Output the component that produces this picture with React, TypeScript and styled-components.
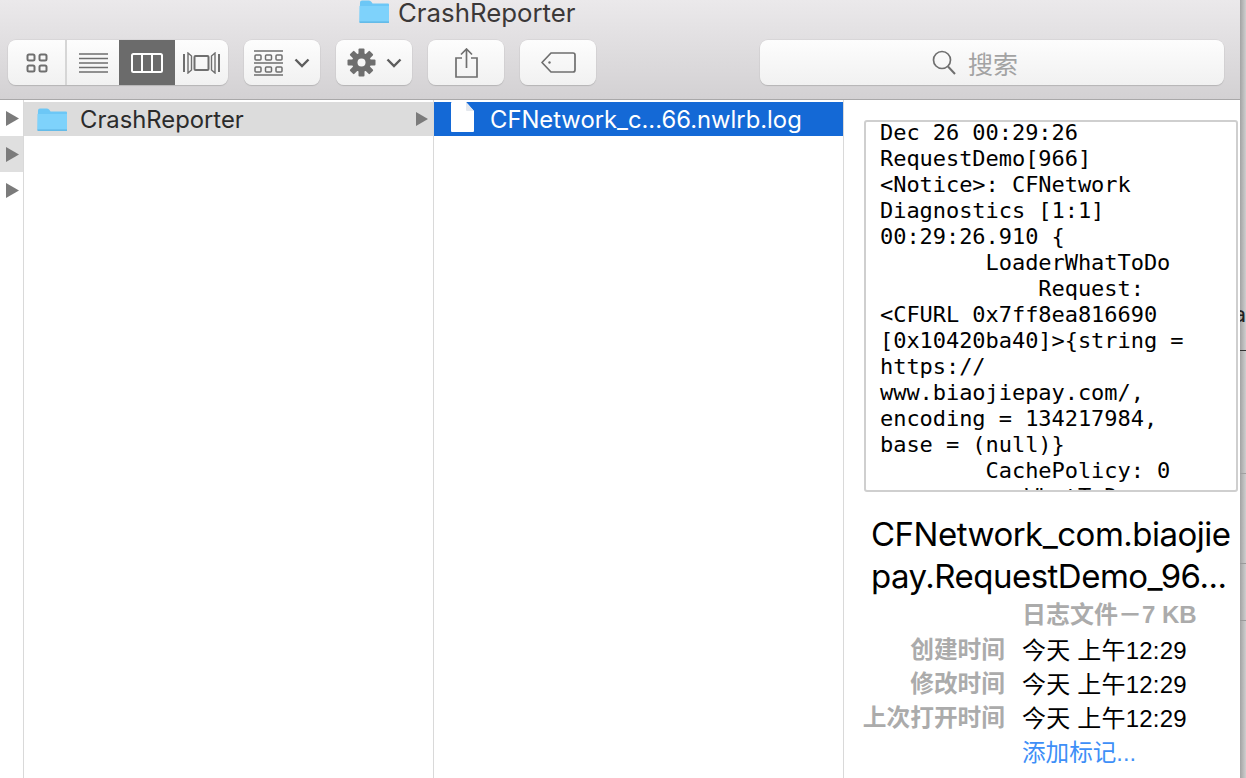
import styled, { createGlobalStyle } from "styled-components";

const GlobalStyle = createGlobalStyle`
  html, body {
    margin: 0;
    padding: 0;
    background: #fff;
    overflow: hidden;
  }
  body {
    font-family: "Inter", "Liberation Sans", "Noto Sans CJK SC", sans-serif;
  }
  svg {
    display: block;
    flex: none;
  }
`;

const Page = styled.div`
  width: 1246px;
  height: 778px;
  display: flex;
  overflow: hidden;
`;

const Window = styled.div`
  width: 1240px;
  height: 778px;
  flex: none;
  display: flex;
  flex-direction: column;
  overflow: hidden;
`;

// strip of whatever is behind the finder window
const BehindStrip = styled.div`
  width: 6px;
  flex: none;
  position: relative;
  overflow: hidden;
  background: linear-gradient(90deg, #a3a3a3, #cfcfcf);
`;

const StripLine = styled.div<{ $top: number; $color: string }>`
  position: absolute;
  left: 0;
  right: 0;
  top: ${(p) => p.$top}px;
  height: 1px;
  background: ${(p) => p.$color};
`;

const StripGlyph = styled.span`
  position: absolute;
  left: -7px;
  top: 302px;
  font-size: 22px;
  line-height: 26px;
  font-family: "DejaVu Sans Mono", monospace;
  color: #222;
`;

const TitleBar = styled.div`
  height: 100px;
  flex: none;
  box-sizing: border-box;
  border-bottom: 1px solid #a9a8a9;
  background: linear-gradient(#ebe9eb, #d3d1d3);
  display: flex;
  flex-direction: column;
`;

const TitleRow = styled.div`
  height: 40px;
  flex: none;
  display: flex;
  align-items: flex-start;
  padding-left: 359px;
  gap: 9px;
  overflow: hidden;
`;

const TitleFolder = styled.div`
  margin-top: -1px;
`;

const TitleText = styled.span`
  font-size: 25.8px;
  line-height: 26px;
  color: #3b3838;
`;

const Toolbar = styled.div`
  display: flex;
  padding-left: 8px;
  height: 45px;
  align-items: flex-start;
`;

const ButtonGroup = styled.div`
  display: flex;
  width: 220px;
  height: 45px;
  border-radius: 8px;
  overflow: hidden;
  background: linear-gradient(#fdfdfd, #f1f1f1);
  box-shadow: 0 1px 1px #b5b4b5, 0 0 0 0.5px #cfcdcf;
  margin-right: 16px;
`;

const Segment = styled.div<{ $w: number; $active?: boolean; $divider?: boolean }>`
  width: ${(p) => p.$w}px;
  box-sizing: border-box;
  display: flex;
  align-items: center;
  justify-content: center;
  color: ${(p) => (p.$active ? "#fff" : "#6f6f6f")};
  background: ${(p) => (p.$active ? "#6b6b6b" : "transparent")};
  border-right: ${(p) => (p.$divider ? "2px solid #d6d6d6" : "none")};
`;

const ToolButton = styled.div<{ $gap?: number }>`
  width: 76px;
  height: 45px;
  flex: none;
  display: flex;
  align-items: center;
  justify-content: center;
  gap: ${(p) => p.$gap ?? 0}px;
  border-radius: 8px;
  color: #6f6f6f;
  background: linear-gradient(#fdfdfd, #f1f1f1);
  box-shadow: 0 1px 1px #b5b4b5, 0 0 0 0.5px #cfcdcf;
  margin-right: 16px;
`;

const SearchField = styled.div`
  width: 464px;
  height: 45px;
  flex: none;
  box-sizing: border-box;
  padding-right: 34px;
  display: flex;
  align-items: center;
  justify-content: center;
  gap: 12px;
  border-radius: 8px;
  background: linear-gradient(#fdfdfd, #f1f1f1);
  box-shadow: 0 1px 1px #b5b4b5, 0 0 0 0.5px #cfcdcf;
  color: #a3a3a3;
  font-size: 25px;
  font-family: "Noto Sans CJK SC", sans-serif;
  margin-left: 148px;
`;

const Browser = styled.div`
  flex: 1;
  display: flex;
  min-height: 0;
`;

const Gutter = styled.div`
  width: 24px;
  flex: none;
  box-sizing: border-box;
  border-right: 1px solid #d9d9d9;
  display: flex;
  flex-direction: column;
`;

const GutterRow = styled.div<{ $hl?: boolean }>`
  height: 36px;
  display: flex;
  align-items: center;
  padding-left: 6px;
  background: ${(p) => (p.$hl ? "#dfdfdf" : "transparent")};
`;

const Column = styled.div`
  width: 410px;
  flex: none;
  box-sizing: border-box;
  border-right: 1px solid #d9d9d9;
  padding-top: 2px;
`;

const Row = styled.div<{ $selected?: boolean }>`
  height: 34px;
  display: flex;
  align-items: center;
  font-size: 23.8px;
  color: ${(p) => (p.$selected ? "#fff" : "#2b2b2b")};
  background: ${(p) => (p.$selected ? "#1469d6" : "#dcdcdc")};
`;

const RowIcon = styled.div<{ $ml: number; $raise?: number }>`
  margin-left: ${(p) => p.$ml}px;
  margin-bottom: ${(p) => p.$raise ?? 0}px;
`;

const RowLabel = styled.span<{ $ml: number }>`
  margin-left: ${(p) => p.$ml}px;
`;

const RowChevron = styled.div`
  margin-left: auto;
  margin-right: 5px;
`;

const Preview = styled.div`
  flex: 1;
  min-width: 0;
  display: flex;
  flex-direction: column;
`;

const LogBox = styled.div`
  margin: 20px 0 0 20px;
  width: 374px;
  height: 372px;
  flex: none;
  box-sizing: border-box;
  border: 2px solid #cfcfcf;
  border-radius: 3px;
  overflow: hidden;
  padding: 0 14px;
`;

const LogText = styled.pre`
  margin: -2px 0 0;
  font-family: "DejaVu Sans Mono", monospace;
  font-size: 22px;
  line-height: 26px;
  color: #000;
  white-space: pre;
  letter-spacing: -0.05px;
`;

const FileTitle = styled.div`
  margin: 21px 0 0 27px;
  font-size: 33px;
  line-height: 42px;
  color: #000;
  letter-spacing: -0.5px;
  white-space: pre;
`;

const Kind = styled.div`
  margin: 3px 0 0 178px;
  font-size: 24px;
  line-height: 30px;
  font-weight: 700;
  color: #ababab;
  font-family: "Liberation Sans", "Noto Sans CJK SC", sans-serif;
`;

const Meta = styled.div`
  margin-top: 1px;
`;

const MetaRow = styled.div`
  display: flex;
  height: 34px;
  align-items: center;
`;

const MetaLabel = styled.div`
  width: 161px;
  flex: none;
  text-align: right;
  font-size: 23.7px;
  font-weight: 700;
  color: #ababab;
  font-family: "Noto Sans CJK SC", sans-serif;
`;

const MetaValue = styled.div`
  margin-left: 17px;
  font-size: 24px;
  letter-spacing: 0.2px;
  color: #000;
  font-family: "Liberation Sans", "Noto Sans CJK SC", sans-serif;
`;

const AddTag = styled.div`
  margin: 3px 0 0 178px;
  height: 34px;
  line-height: 34px;
  font-size: 23.6px;
  color: #3e8ff7;
  font-family: "Liberation Sans", "Noto Sans CJK SC", sans-serif;
`;

const Triangle = ({ w = 13, h = 15 }: { w?: number; h?: number }) => (
  <svg width={w} height={h} viewBox="0 0 13 15">
    <path d="M0 0 L13 7.5 L0 15 Z" fill="#7b7b7b" />
  </svg>
);

const Folder = () => (
  <svg width="30" height="25" viewBox="0 0 30 24">
    <path d="M1 3 Q1 1 3 1 H10 Q11.5 1 12.5 2.5 L13.5 4 H29 Q30 4 30 5 V22 Q30 23.5 28.5 23.5 H2.5 Q0.5 23.5 0.5 22 Z" fill="#6cc7f6" />
    <path d="M0.5 6.5 H30 V22 Q30 23.5 28.5 23.5 H2 Q0.5 23.5 0.5 22 Z" fill="#7ed2fb" />
    <path d="M0.5 22.6 H30" stroke="#52abdc" strokeWidth="1" />
  </svg>
);

const IconView = () => (
  <svg width="22" height="20" viewBox="0 0 22 20" fill="none" stroke="currentColor" strokeWidth="2">
    <rect x="1.5" y="1.5" width="7" height="6" rx="1.5" />
    <rect x="13.5" y="1.5" width="7" height="6" rx="1.5" />
    <rect x="1.5" y="12.5" width="7" height="6" rx="1.5" />
    <rect x="13.5" y="12.5" width="7" height="6" rx="1.5" />
  </svg>
);

const ListView = () => (
  <svg width="29" height="20" viewBox="0 0 29 20" stroke="currentColor" strokeWidth="1.4">
    <path d="M0 1 H29 M0 5.5 H29 M0 10 H29 M0 14.5 H29 M0 19 H29" />
  </svg>
);

const ColumnView = () => (
  <svg width="32" height="20" viewBox="0 0 32 20" fill="none" stroke="currentColor" strokeWidth="2">
    <rect x="1" y="1" width="30" height="18" rx="1.5" />
    <path d="M11 1 V19 M21 1 V19" />
  </svg>
);

const FlowView = () => (
  <svg width="37" height="22" viewBox="0 0 37 22" fill="none" stroke="currentColor" strokeWidth="1.4">
    <rect x="11.5" y="4" width="14" height="14" rx="1" strokeWidth="2" />
    <path d="M1 2 V20 M36 2 V20" strokeWidth="2" />
    <path d="M5 1 L8.5 4 V18 L5 21 Z M32 1 L28.5 4 V18 L32 21 Z" />
  </svg>
);

const GroupIcon = () => (
  <svg width="29" height="26" viewBox="0 0 29 26" fill="none" stroke="currentColor">
    <path d="M0 1 H29 M0 13 H29 M0 25 H29" strokeWidth="1.4" />
    <rect x="1" y="5" width="6" height="5" strokeWidth="1.5" rx="1" />
    <rect x="11.5" y="5" width="6" height="5" strokeWidth="1.5" rx="1" />
    <rect x="22" y="5" width="6" height="5" strokeWidth="1.5" rx="1" />
    <rect x="1" y="17" width="6" height="5" strokeWidth="1.5" rx="1" />
    <rect x="11.5" y="17" width="6" height="5" strokeWidth="1.5" rx="1" />
    <rect x="22" y="17" width="6" height="5" strokeWidth="1.5" rx="1" />
  </svg>
);

const Chevron = () => (
  <svg width="16" height="10" viewBox="0 0 16 10" fill="none" stroke="#5d5d5d" strokeWidth="2.4">
    <path d="M1.5 1.5 L8 8 L14.5 1.5" />
  </svg>
);

const Gear = () => {
  const teeth = [0, 45, 90, 135];
  return (
    <svg width="29" height="29" viewBox="0 0 29 29">
      {teeth.map((a) => (
        <rect key={a} x="11.5" y="0.5" width="6" height="28" rx="1" fill="currentColor" transform={`rotate(${a} 14.5 14.5)`} />
      ))}
      <circle cx="14.5" cy="14.5" r="9.5" fill="currentColor" />
      <circle cx="14.5" cy="14.5" r="4" fill="#f7f7f7" />
    </svg>
  );
};

const ShareIcon = () => (
  <svg width="23" height="30" viewBox="0 0 23 30" fill="none" stroke="currentColor" strokeWidth="1.7">
    <path d="M7 10 H1 V29 H22 V10 H16" />
    <path d="M11.5 20 V1.5 M6 6.5 L11.5 1 L17 6.5" />
  </svg>
);

const TagIcon = () => (
  <svg width="35" height="21" viewBox="0 0 35 21" fill="none" stroke="currentColor" strokeWidth="1.7">
    <path d="M10 1 H32 Q34 1 34 3 V18 Q34 20 32 20 H10 L1 10.5 Z" strokeLinejoin="round" />
    <circle cx="8.5" cy="10.5" r="1.2" fill="currentColor" stroke="none" />
  </svg>
);

const SearchIcon = () => (
  <svg width="24" height="25" viewBox="0 0 24 25" fill="none" stroke="#6f6f6f" strokeWidth="1.7">
    <circle cx="10" cy="10" r="8.5" />
    <path d="M16 16.5 L23 24" strokeWidth="2" />
  </svg>
);

const FileIcon = () => (
  <svg width="23" height="30" viewBox="0 0 23 30">
    <path d="M1 0 H15 L23 9 V29 Q23 30 22 30 H1 Q0 30 0 29 V1 Q0 0 1 0 Z" fill="#fff" />
    <path d="M15 0 L23 9 H16 Q15 9 15 8 Z" fill="#e4e8ee" />
  </svg>
);

const logText = `Dec 26 00:29:26
RequestDemo[966]
<Notice>: CFNetwork
Diagnostics [1:1]
00:29:26.910 {
        LoaderWhatToDo
            Request:
<CFURL 0x7ff8ea816690
[0x10420ba40]>{string =
https://
www.biaojiepay.com/,
encoding = 134217984,
base = (null)}
        CachePolicy: 0
           WhatToDo:`;

const meta = ["创建时间", "修改时间", "上次打开时间"];

export default function App() {
  return (
    <Page>
      <GlobalStyle />
      <Window>
        <TitleBar>
          <TitleRow>
            <TitleFolder>
              <Folder />
            </TitleFolder>
            <TitleText>CrashReporter</TitleText>
          </TitleRow>
          <Toolbar>
            <ButtonGroup>
              <Segment $w={59} $divider>
                <IconView />
              </Segment>
              <Segment $w={52}>
                <ListView />
              </Segment>
              <Segment $w={56} $active>
                <ColumnView />
              </Segment>
              <Segment $w={53}>
                <FlowView />
              </Segment>
            </ButtonGroup>
            <ToolButton $gap={11}>
              <GroupIcon />
              <Chevron />
            </ToolButton>
            <ToolButton $gap={10}>
              <Gear />
              <Chevron />
            </ToolButton>
            <ToolButton>
              <ShareIcon />
            </ToolButton>
            <ToolButton>
              <TagIcon />
            </ToolButton>
            <SearchField>
              <SearchIcon />
              搜索
            </SearchField>
          </Toolbar>
        </TitleBar>
        <Browser>
          <Gutter>
            <GutterRow>
              <Triangle />
            </GutterRow>
            <GutterRow $hl>
              <Triangle />
            </GutterRow>
            <GutterRow>
              <Triangle />
            </GutterRow>
          </Gutter>
          <Column>
            <Row>
              <RowIcon $ml={13}>
                <Folder />
              </RowIcon>
              <RowLabel $ml={13}>CrashReporter</RowLabel>
              <RowChevron>
                <Triangle w={12} h={14} />
              </RowChevron>
            </Row>
          </Column>
          <Column>
            <Row $selected>
              <RowIcon $ml={17} $raise={4}>
                <FileIcon />
              </RowIcon>
              <RowLabel $ml={16}>CFNetwork_c...66.nwlrb.log</RowLabel>
            </Row>
          </Column>
          <Preview>
            <LogBox>
              <LogText>{logText}</LogText>
            </LogBox>
            <FileTitle>{"CFNetwork_com.biaojie\npay.RequestDemo_96..."}</FileTitle>
            <Kind>日志文件－7 KB</Kind>
            <Meta>
              {meta.map((label) => (
                <MetaRow key={label}>
                  <MetaLabel>{label}</MetaLabel>
                  <MetaValue>今天 上午12:29</MetaValue>
                </MetaRow>
              ))}
            </Meta>
            <AddTag>添加标记...</AddTag>
          </Preview>
        </Browser>
      </Window>
      <BehindStrip>
        <StripGlyph>a</StripGlyph>
        <StripLine $top={350} $color="#333" />
        <StripLine $top={473} $color="#a0a0a0" />
        <StripLine $top={563} $color="#9a9a9a" />
        <StripLine $top={620} $color="#9a9a9a" />
      </BehindStrip>
    </Page>
  );
}
